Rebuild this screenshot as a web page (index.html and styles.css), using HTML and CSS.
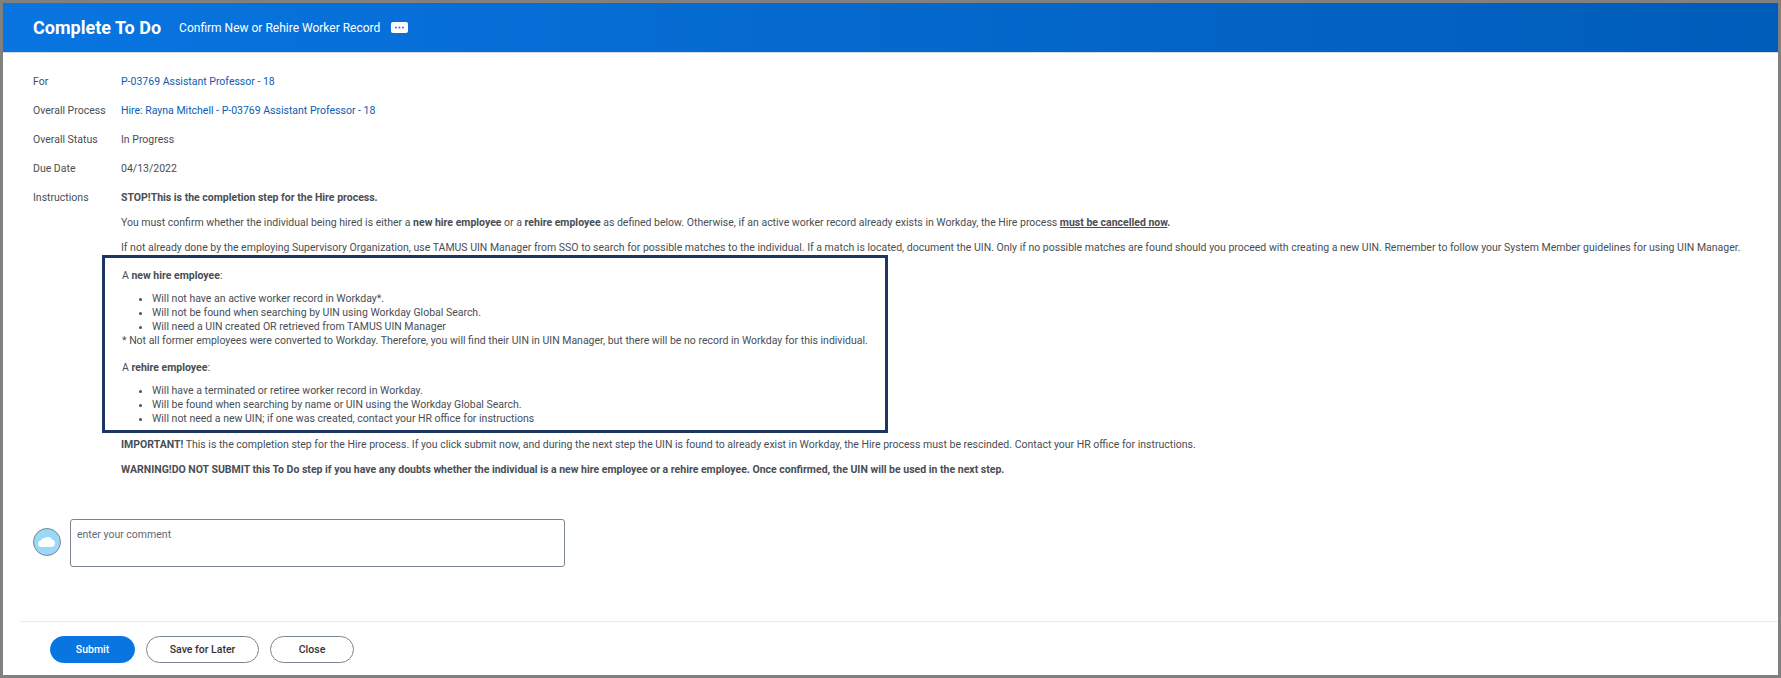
FILE: index.html
```html
<!DOCTYPE html>
<html lang="en">
<head>
<meta charset="utf-8">
<title>Complete To Do</title>
<link rel="stylesheet" href="styles.css">
</head>
<body>
<div class="frame">
  <header class="banner">
    <h1 class="banner-title">Complete To Do</h1>
    <span class="banner-sub">Confirm New or Rehire Worker Record</span>
    <span class="more"><svg width="17" height="11" viewBox="0 0 17 11"><rect width="17" height="11" rx="2" fill="#fff"/><circle cx="5" cy="5.500" r="1" fill="#3a6fb5"/><circle cx="8.500" cy="5.500" r="1" fill="#3a6fb5"/><circle cx="12" cy="5.500" r="1" fill="#3a6fb5"/></svg></span>
  </header>
  <main class="content">
    <div class="field"><div class="label">For</div><div class="value"><a class="link">P-03769 Assistant Professor - 18</a></div></div>
    <div class="field"><div class="label">Overall Process</div><div class="value"><a class="link">Hire: Rayna Mitchell - P-03769 Assistant Professor - 18</a></div></div>
    <div class="field"><div class="label">Overall Status</div><div class="value">In Progress</div></div>
    <div class="field"><div class="label">Due Date</div><div class="value">04/13/2022</div></div>
    <div class="field instructions">
      <div class="label">Instructions</div>
      <div class="value">
        <p class="first"><b>STOP!This is the completion step for the Hire process.</b></p>
        <p>You must confirm whether the individual being hired is either a <b>new hire employee</b> or a <b>rehire employee</b> as defined below. Otherwise, if an active worker record already exists in Workday, the Hire process <b><u>must be cancelled now</u>.</b></p>
        <p class="nowrap">If not already done by the employing Supervisory Organization, use TAMUS UIN Manager from SSO to search for possible matches to the individual. If a match is located, document the UIN. Only if no possible matches are found should you proceed with creating a new UIN. Remember to follow your System Member guidelines for using UIN Manager.</p>
        <section class="callout">
          <p>A <b>new hire employee</b>:</p>
          <ul>
            <li>Will not have an active worker record in Workday*.</li>
            <li>Will not be found when searching by UIN using Workday Global Search.</li>
            <li>Will need a UIN created OR retrieved from TAMUS UIN Manager</li>
          </ul>
          <p class="note">* Not all former employees were converted to Workday. Therefore, you will find their UIN in UIN Manager, but there will be no record in Workday for this individual.</p>
          <p class="second">A <b>rehire employee</b>:</p>
          <ul>
            <li>Will have a terminated or retiree worker record in Workday.</li>
            <li>Will be found when searching by name or UIN using the Workday Global Search.</li>
            <li>Will not need a new UIN; if one was created, contact your HR office for instructions</li>
          </ul>
        </section>
        <p class="important"><b>IMPORTANT!</b> This is the completion step for the Hire process. If you click submit now, and during the next step the UIN is found to already exist in Workday, the Hire process must be rescinded. Contact your HR office for instructions.</p>
        <p><b>WARNING!DO NOT SUBMIT this To Do step if you have any doubts whether the individual is a new hire employee or a rehire employee. Once confirmed, the UIN will be used in the next step.</b></p>
      </div>
    </div>
    <div class="comment">
      <span class="avatar"><svg width="28" height="28" viewBox="0 0 28 28"><circle cx="14" cy="14" r="13.500" fill="#99d9f7" stroke="#7b858f"/><path d="M8 19a3.200 3.200 0 0 1-.5-6.300 4 4 0 0 1 4.500-2.700 4.500 4.500 0 0 1 7 1.500 3.800 3.800 0 0 1 3 3.700 3.800 3.800 0 0 1-3 3.800z" fill="#fff"/></svg></span>
      <div class="comment-box">enter your comment</div>
    </div>
  </main>
  <footer class="actions">
    <button class="btn primary">Submit</button>
    <button class="btn save">Save for Later</button>
    <button class="btn close">Close</button>
  </footer>
</div>
</body>
</html>
```
FILE: styles.css
```css
* { box-sizing: border-box; }
html, body { margin: 0; height: 100%; }
body { font-family: Roboto, "Liberation Sans", sans-serif; font-size: 10.5px; color: #494e54; background: #808080; overflow: hidden; }
.frame { height: 678px; margin: 0; border: 3px solid #808080; background: #fff; display: flex; flex-direction: column; }
.banner { height: 50px; flex: none; background: linear-gradient(90deg, #0875e1 0%, #005cb9 100%); border-bottom: 1px solid #d8dde3; color: #fff; display: flex; align-items: center; padding-left: 30px; }
.banner-title { margin: 0; font-size: 18px; font-weight: 700; line-height: 24px; }
.banner-sub { margin-left: 18px; font-size: 12px; font-weight: 400; }
.more { margin-left: 11px; display: flex; }
.content { flex: 1; padding: 14px 0 0 30px; display: flex; flex-direction: column; min-height: 0; }
.field { display: grid; grid-template-columns: 88px 1fr; min-height: 29px; line-height: 29px; }
.label { color: #494e54; }
.link { color: #0b5cb3; }
.value p { margin: 0 0 10px; line-height: 15px; }
.value p.first { line-height: 29px; margin-bottom: 3px; }
.value p.nowrap { white-space: nowrap; margin-bottom: 0; }
.callout { width: 786px; height: 178px; margin: 0 0 0 -19px; border: 3px solid #1e3461; padding: 11px 0 0 17px; line-height: 14px; }
.value .callout p { line-height: 14px; margin: 0; }
.callout ul { margin: 9px 0 0; padding: 0 0 0 30px; line-height: 14px; }
.value .callout p.second { margin-top: 13px; }
.value p.important { margin-top: 4px; }
.comment { display: flex; align-items: flex-start; margin-top: 32px; }
.avatar { width: 28px; height: 28px; margin: 9px 9px 0 0; display: flex; }
.comment-box { width: 495px; height: 48px; border: 1px solid #7b858f; border-radius: 3px; padding: 8px 6px 0; line-height: 14px; color: #5e6a75; }
.actions { height: 54px; margin-left: 17px; flex: none; border-top: 1px solid #e8ebed; display: flex; align-items: flex-start; gap: 11px; padding: 14px 0 0 30px; }
.btn { height: 27px; border-radius: 14px; font: 500 10.5px Roboto, sans-serif; padding: 0; background: #fff; border: 1px solid #7b858f; color: #333; }
.primary { width: 85px; background: #0875e1; border-color: #0875e1; color: #fff; }
.save { width: 113px; }
.close { width: 84px; }
```
